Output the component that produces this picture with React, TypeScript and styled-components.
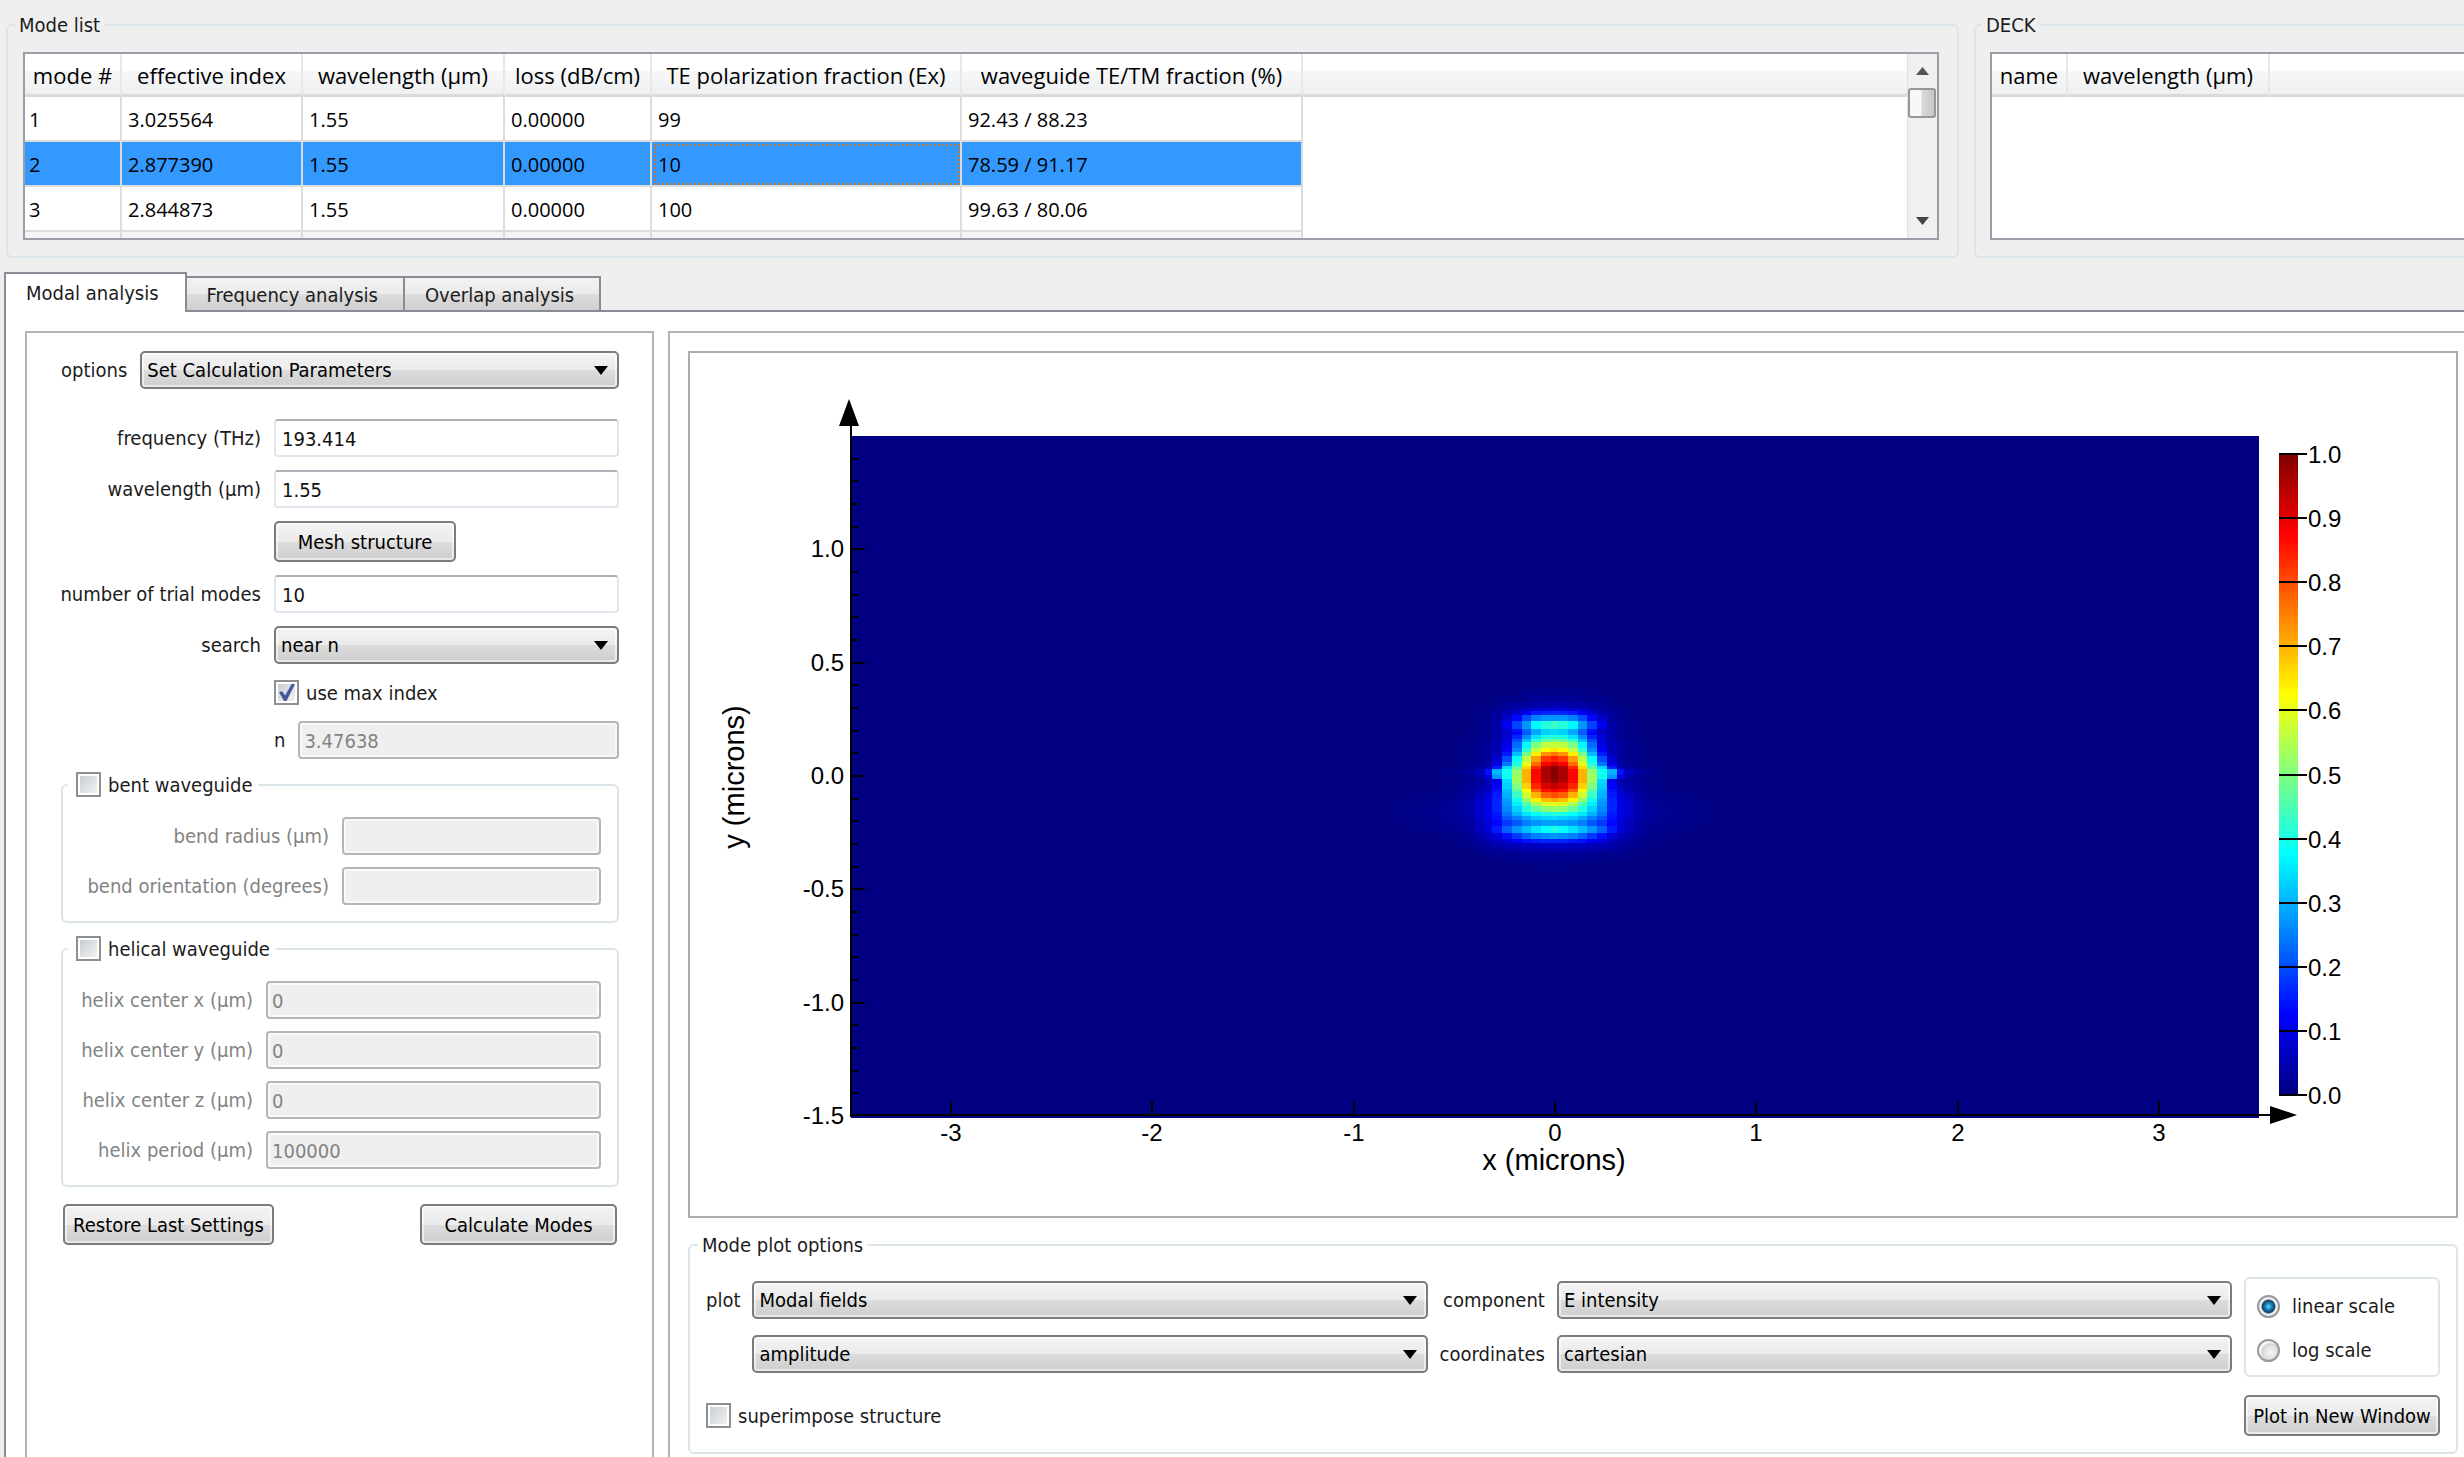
import React, { useId, useState } from "react";
import styled, { createGlobalStyle, css } from "styled-components";

const uiFont = `"DejaVu Sans Condensed", Tahoma, "DejaVu Sans", sans-serif`;
const gridFont = `"Open Sans", "Segoe UI", "Noto Sans", sans-serif`;
const plotFont = `"Liberation Sans", Arial, sans-serif`;

const GlobalStyle = createGlobalStyle`
  *, *::before, *::after { box-sizing: border-box; }
  body { margin: 0; background: #efefef; overflow: hidden; }
  input, select, button { font: inherit; color: inherit; margin: 0; }
`;

/* ---------- shell ---------- */

const Page = styled.div`
  display: flex;
  flex-direction: column;
  min-height: 100vh;
  color: #1c1c1c;
  font: 20px/24px ${uiFont};
`;

const TopRow = styled.div`
  display: flex;
  gap: 15px;
  padding: 13px 0 14px 6px;
`;

const Group = styled.fieldset`
  min-width: 0;
  margin: 0;
  padding: 15px 16px 16px;
  border: 2px solid #dce5ea;
  border-radius: 6px;
`;

const GroupTitle = styled.legend`
  margin-left: -8px;
  padding: 0 4px;
`;

const ModeListGroup = styled(Group)`
  flex: 1;
  padding-right: 18px;
  padding-left: 15px;
`;

const DeckGroup = styled(Group)`
  flex: 0 0 490px;
  padding-right: 0;
  padding-left: 14px;
  border-right: 0;
  border-radius: 6px 0 0 6px;
`;

/* ---------- tables ---------- */

const GridFrame = styled.div<{ $open?: boolean }>`
  display: flex;
  height: 188px;
  overflow: hidden;
  border: 2px solid #9a9ea7;
  border-right-width: ${(p) => (p.$open ? 0 : 2)}px;
  background: #fff;
`;

const GridScroll = styled.div`
  flex: 1;
  min-width: 0;
  overflow: hidden;
`;

const Grid = styled.table`
  width: 100%;
  table-layout: fixed;
  border-collapse: separate;
  border-spacing: 0;
  font: 20px/24px ${gridFont};
  color: #000;
`;

const Col = styled.col<{ $w?: number }>`
  width: ${(p) => (p.$w ? `${p.$w}px` : "auto")};
`;

const Th = styled.th<{ $last?: boolean }>`
  height: 43px;
  padding: 2px 0 0;
  border-right: ${(p) => (p.$last ? "0" : "2px solid #e6e8ea")};
  border-bottom: 3px solid #dadada;
  background: linear-gradient(#fff 42%, #f6f7f9 43%, #eff0f2);
  font-size: 22px;
  font-weight: 400;
  white-space: nowrap;
`;

const Tr = styled.tr<{ $selected?: boolean; $alt?: boolean }>`
  background: ${(p) => (p.$selected ? "#3399ff" : p.$alt ? "#f5f5f5" : "#fff")};
`;

const Td = styled.td<{ $focus?: boolean }>`
  height: 45px;
  padding: 2px 0 0 6px;
  border-right: 2px solid #dcdcdc;
  border-bottom: 2px solid #dcdcdc;
  white-space: nowrap;
  &:first-child {
    padding-left: 4px;
  }
  ${(p) =>
    p.$focus &&
    css`
      outline: 2px dotted #b5793e;
      outline-offset: -4px;
    `}
`;

const Blank = styled.td`
  background: #fff;
`;

const ScrollBar = styled.div`
  display: flex;
  flex-direction: column;
  align-items: stretch;
  width: 30px;
  border-left: 1px solid #e0e0e0;
  background: #f0f0f0;
`;

const ScrollButton = styled.button`
  display: flex;
  align-items: center;
  justify-content: center;
  height: 34px;
  padding: 0;
  border: 0;
  background: none;
`;

const ScrollTrack = styled.div`
  flex: 1;
`;

const ScrollThumb = styled.div`
  width: 28px;
  height: 30px;
  border: 2px solid #979797;
  border-radius: 3px;
  background: linear-gradient(90deg, #f8f8f8 45%, #d8dadc 50%, #c4c6c9);
`;

/* ---------- tabs ---------- */

const Tabs = styled.div`
  display: flex;
  align-items: flex-end;
  height: 38px;
  padding-left: 4px;
`;

const Tab = styled.button<{ $active: boolean }>`
  height: 34px;
  padding: 2px 25px 0 20px;
  border: 2px solid #898c95;
  border-left-width: 0;
  border-bottom: 0;
  background: linear-gradient(#f2f2f2, #ebebeb 50%, #dddddd 51%, #cfcfcf);
  ${(p) =>
    p.$active &&
    css`
      position: relative;
      height: 40px;
      margin-bottom: -2px;
      padding: 0 26px 0 20px;
      border-left-width: 2px;
      background: #fff;
    `}
`;

const Pane = styled.div`
  flex: 1;
  display: flex;
  gap: 14px;
  margin-left: 4px;
  padding: 19px 0 0 19px;
  border-top: 2px solid #898c95;
  border-left: 2px solid #898c95;
  background: #fff;
`;

const SettingsPanel = styled.form`
  flex: 0 0 629px;
  padding: 18px 33px 0 34px;
  border: 2px solid #b4b4b4;
  border-bottom: 0;
`;

const PlotPanel = styled.section`
  flex: 1;
  min-width: 0;
  padding: 18px 6px 0 18px;
  border: 2px solid #b4b4b4;
  border-width: 2px 0 0 2px;
`;

/* ---------- controls ---------- */

const raised = css`
  border: 2px solid #7c7c7c;
  border-radius: 5px;
  background: linear-gradient(#f3f3f3, #ebebeb 50%, #dcdcdc 51%, #cecece);
  box-shadow: inset 0 0 0 2px rgba(255, 255, 255, 0.55);
`;

const Button = styled.button<{ $w: number }>`
  ${raised}
  width: ${(p) => p.$w}px;
  height: 41px;
  padding: 0;
  color: #000;
  white-space: nowrap;
`;

const ComboBox = styled.div`
  position: relative;
  flex: 1;
  min-width: 0;
`;

const ComboSelect = styled.select`
  ${raised}
  appearance: none;
  display: block;
  width: 100%;
  height: 38px;
  padding: 0 40px 0 5px;
  color: #000;
`;

const ComboArrow = styled.svg`
  position: absolute;
  top: 15px;
  right: 11px;
  pointer-events: none;
`;

const TextBox = styled.input`
  width: 100%;
  min-width: 0;
  height: 38px;
  padding: 2px 6px 0;
  border: 2px solid #e1e5ed;
  border-top-color: #adb0b6;
  border-radius: 4px;
  background: #fff;
  color: #111;
  &:disabled {
    padding-left: 4px;
    border-color: #b6b6b6;
    background: #efefef;
    box-shadow: inset 0 0 0 2px #f9f9f9;
    color: #838383;
  }
`;

const Tick = styled.input`
  appearance: none;
  flex: none;
  display: grid;
  place-items: center;
  width: 25px;
  height: 25px;
  padding: 2px;
  border: 2px solid #8e8f8f;
  background: linear-gradient(135deg, #c4cad0, #f6f6f6);
  background-clip: content-box;
  &:checked::before {
    content: "";
    width: 17px;
    height: 17px;
    background: #46599c;
    clip-path: polygon(6% 48%, 24% 42%, 42% 68%, 80% 0, 100% 0, 50% 100%, 36% 100%);
  }
`;

const Radio = styled.input`
  appearance: none;
  flex: none;
  width: 23px;
  height: 23px;
  border: 2px solid #96989a;
  border-radius: 50%;
  background: radial-gradient(circle at 60% 60%, #f6f6f6, #d3d6d9 55%, #fafafa 62%);
  &:checked {
    background: radial-gradient(circle at 50% 50%, #4cc0ea 0 8%, #1b7fb4 25%, #123f5f 46%, #eef0f2 56%);
  }
`;

const CheckLabel = styled.label`
  display: flex;
  align-items: center;
  gap: 7px;
`;

const RadioLabel = styled(CheckLabel)`
  gap: 12px;
`;

/* ---------- settings form ---------- */

const OptionsRow = styled.div`
  display: flex;
  align-items: center;
  gap: 13px;
  margin-bottom: 30px;
`;

const FieldGrid = styled.div<{ $label: number; $gap?: number }>`
  display: grid;
  grid-template-columns: ${(p) => p.$label}px minmax(0, 1fr);
  align-items: center;
  gap: ${(p) => p.$gap ?? 12}px 13px;
`;

const FieldLabel = styled.label<{ $muted?: boolean }>`
  justify-self: end;
  color: ${(p) => (p.$muted ? "#838383" : "inherit")};
  white-space: nowrap;
`;

const SecondColumn = styled.div`
  grid-column: 2;
  display: flex;
  align-items: center;
  gap: 13px;
`;

const CheckCell = styled(SecondColumn)`
  height: 31px;
`;

const WaveguideGroup = styled(Group)`
  margin-top: 13px;
  padding-top: 19px;
`;

const WaveguideTitle = styled.legend`
  height: 26px;
  margin-left: -11px;
  padding: 0 6px 0 8px;
`;

const FormActions = styled.div`
  display: flex;
  justify-content: space-between;
  padding: 17px 2px;
`;

/* ---------- plot ---------- */

const PlotFrame = styled.div`
  border: 2px solid #adadad;
`;

const PlotSvg = styled.svg`
  display: block;
  width: 100%;
  height: auto;
  font-family: ${plotFont};
  font-size: 24px;
`;

const PlotOptions = styled(Group)`
  margin-top: 15px;
  padding: 20px 16px 16px;
`;

const PlotGrid = styled.div`
  display: grid;
  grid-template-columns: auto minmax(0, 1fr) auto minmax(0, 1fr) 196px;
  grid-template-rows: 46px 46px;
  align-items: center;
  gap: 8px 12px;
`;

const PlotSecond = styled.div`
  grid-column: 2;
`;

const ScaleBox = styled.div`
  grid-column: 5;
  grid-row: 1 / 3;
  align-self: stretch;
  display: flex;
  flex-direction: column;
  justify-content: center;
  gap: 20px;
  padding: 2px 0 0 11px;
  border: 2px solid #dce5ea;
  border-radius: 6px;
`;

const PlotFooter = styled.div`
  display: flex;
  align-items: center;
  justify-content: space-between;
  margin-top: 18px;
`;

/* ---------- small parts ---------- */

function Combo({ id, label, value }: { id?: string; label?: string; value: string }) {
  return (
    <ComboBox>
      <ComboSelect id={id} aria-label={label} defaultValue={value}>
        <option>{value}</option>
      </ComboSelect>
      <ComboArrow width="14" height="9" viewBox="0 0 14 9" aria-hidden="true">
        <path d="M0 0H14L7 9Z" fill="#000" />
      </ComboArrow>
    </ComboBox>
  );
}

function Field({ label, value, disabled }: { label: string; value: string; disabled?: boolean }) {
  const id = useId();
  return (
    <>
      <FieldLabel htmlFor={id} $muted={disabled}>{label}</FieldLabel>
      <TextBox id={id} defaultValue={value} disabled={disabled} />
    </>
  );
}

/* ---------- heat map ---------- */

const jetStops: [number, number[]][] = [
  [0, [0, 0, 128]],
  [0.125, [0, 0, 255]],
  [0.375, [0, 255, 255]],
  [0.625, [255, 255, 0]],
  [0.875, [255, 0, 0]],
  [1, [128, 0, 0]],
];

function jet(v: number) {
  const t = Math.max(0, Math.min(1, v));
  const i = Math.max(1, jetStops.findIndex(([s]) => t <= s));
  const [a, ca] = jetStops[i - 1];
  const [b, cb] = jetStops[i];
  const k = (t - a) / (b - a);
  return `rgb(${ca.map((c, n) => Math.round(c + (cb[n] - c) * k)).join(",")})`;
}

// Mesh rows: [top, E intensity for the columns from the centre outwards].
// Lengths are in thirds of a plot unit.
const meshRows: [number, number[]][] = [
  [136, [0.005, 0.005, 0.005]],
  [150, [0.01, 0.01, 0.01, 0.01]],
  [168, [0.025, 0.025, 0.02, 0.015, 0.01, 0.01]],
  [185, [0.045, 0.045, 0.04, 0.035, 0.03, 0.02, 0.01]],
  [204, [0.09, 0.09, 0.08, 0.07, 0.05, 0.03, 0.02, 0.01]],
  [214, [0.17, 0.16, 0.15, 0.12, 0.08, 0.05, 0.03, 0.01]],
  [226, [0.27, 0.27, 0.25, 0.2, 0.13, 0.07, 0.03, 0.01]],
  [243, [0.43, 0.41, 0.37, 0.27, 0.19, 0.11, 0.04, 0.02]],
  [266, [0.34, 0.33, 0.29, 0.22, 0.14, 0.07, 0.04, 0.02]],
  [275, [0.34, 0.33, 0.29, 0.21, 0.13, 0.07, 0.04, 0.02]],
  [285, [0.41, 0.4, 0.35, 0.26, 0.16, 0.08, 0.04, 0.02]],
  [296, [0.49, 0.47, 0.42, 0.31, 0.2, 0.09, 0.04, 0.02]],
  [306, [0.57, 0.56, 0.5, 0.37, 0.23, 0.1, 0.05, 0.03]],
  [325, [0.65, 0.63, 0.56, 0.42, 0.26, 0.12, 0.05, 0.03]],
  [337, [0.76, 0.73, 0.64, 0.49, 0.31, 0.15, 0.06, 0.03]],
  [347, [0.85, 0.82, 0.72, 0.56, 0.38, 0.2, 0.08, 0.03]],
  [365, [0.91, 0.88, 0.77, 0.6, 0.41, 0.24, 0.1, 0.04]],
  [377, [0.99, 0.95, 0.84, 0.66, 0.46, 0.34, 0.15, 0.05, 0.03]],
  [388, [1, 0.96, 0.87, 0.7, 0.52, 0.39, 0.3, 0.14, 0.06, 0.03, 0.02]],
  [406, [1, 0.96, 0.87, 0.7, 0.53, 0.39, 0.27, 0.1, 0.04, 0.02]],
  [417, [0.98, 0.95, 0.87, 0.7, 0.53, 0.34, 0.1, 0.05, 0.03]],
  [430, [0.94, 0.91, 0.84, 0.67, 0.5, 0.33, 0.12, 0.06, 0.04]],
  [446, [0.88, 0.86, 0.78, 0.62, 0.46, 0.31, 0.14, 0.08, 0.05]],
  [457, [0.8, 0.78, 0.7, 0.58, 0.43, 0.3, 0.15, 0.09, 0.06]],
  [475, [0.71, 0.69, 0.64, 0.52, 0.39, 0.28, 0.16, 0.1, 0.07]],
  [487, [0.6, 0.59, 0.54, 0.45, 0.36, 0.27, 0.16, 0.1, 0.08]],
  [498, [0.52, 0.51, 0.47, 0.41, 0.33, 0.26, 0.16, 0.1, 0.08]],
  [516, [0.41, 0.4, 0.38, 0.35, 0.3, 0.24, 0.15, 0.1, 0.08]],
  [528, [0.34, 0.33, 0.32, 0.29, 0.25, 0.21, 0.14, 0.1, 0.07]],
  [540, [0.28, 0.28, 0.27, 0.25, 0.21, 0.18, 0.13, 0.09, 0.06]],
  [557, [0.4, 0.38, 0.35, 0.31, 0.27, 0.22, 0.15, 0.09, 0.06]],
  [580, [0.27, 0.26, 0.25, 0.22, 0.18, 0.14, 0.09, 0.06, 0.04]],
  [598, [0.16, 0.16, 0.15, 0.14, 0.12, 0.09, 0.06, 0.04, 0.03]],
  [610, [0.07, 0.07, 0.065, 0.06, 0.055, 0.05, 0.04, 0.03, 0.02]],
  [627, [0.035, 0.035, 0.035, 0.03, 0.03, 0.025, 0.02, 0.015, 0.01]],
  [640, [0.02, 0.02, 0.02, 0.02, 0.015, 0.015, 0.01, 0.01]],
  [656, [0.01, 0.01, 0.01, 0.01, 0.01, 0.005]],
  [672, [0.005, 0.005, 0.005]],
  [690, []],
];
const meshEdges = [12, 41, 70, 99, 129, 158, 187, 209, 238, 267, 296, 325, 354, 383, 412, 441, 470, 499, 528, 557];

function tail(row: number[], y: number, i: number) {
  const last = row.length - 1;
  const near = (row[last] ?? 0) * Math.exp(-(i - last) / 1.6);
  const halo = 0.07 * Math.exp(-(((y - 510) / 60) ** 2)) * Math.exp(-(i - 7) / 3.6);
  return Math.max(near, halo);
}

function ModeField() {
  const cells: React.ReactElement[] = [];
  for (let r = 0; r < meshRows.length - 1; r++) {
    const [y, row] = meshRows[r];
    const h = meshRows[r + 1][0] - y;
    for (let i = meshEdges.length - 1; i >= 0; i--) {
      const v = i < row.length ? row[i] : tail(row, y, i);
      if (v < 0.004) continue;
      const e = meshEdges[i];
      // Each wider rectangle is overdrawn by the next one towards the centre.
      cells.push(<rect key={`${r}-${i}`} x={-e} y={y} width={2 * e} height={h} fill={jet(v)} />);
    }
  }
  return <g transform="translate(864.5 287) scale(0.33333)" shapeRendering="crispEdges">{cells}</g>;
}

const yTicks = [1, 0.5, 0, -0.5, -1, -1.5];
const xTicks = [-3, -2, -1, 0, 1, 2, 3];
const barTicks = Array.from({ length: 11 }, (_, i) => i / 10);
const minorTicks = Array.from({ length: 29 }, (_, i) => (i - 14) / 10).filter((v) => Math.round(v * 10) % 5 !== 0);
const yPos = (v: number) => Math.round(423 - v * 226.6);
const xPos = (v: number) => Math.round(865 + v * 201.4);
const barPos = (v: number) => Math.round(742 - v * 641);

function ModePlot() {
  return (
    <PlotSvg viewBox="0 0 1766 863" role="img" aria-label="E intensity">
      <defs>
        <linearGradient id="jet" x1="0" y1="1" x2="0" y2="0">
          {jetStops.map(([s]) => <stop key={s} offset={s} stopColor={jet(s)} />)}
        </linearGradient>
      </defs>
      <rect x="161" y="83" width="1408" height="682" fill="#000080" />
      <ModeField />
      <g stroke="#000" strokeWidth="2">
        <path d="M161 72V764M160 762H1580" fill="none" />
        {yTicks.slice(0, 5).map((v) => <path key={v} d={`M161 ${yPos(v)}h14`} />)}
        {minorTicks.map((v) => <path key={v} d={`M161 ${yPos(v)}h7`} />)}
        {xTicks.map((v) => <path key={v} d={`M${xPos(v)} 762v-14`} />)}
      </g>
      <path d="M159 46L169 73H149ZM1607 762L1580 753V771Z" />
      {yTicks.map((v) => <text key={v} x="154" y={yPos(v) + 8} textAnchor="end">{v.toFixed(1)}</text>)}
      {xTicks.map((v) => <text key={v} x={xPos(v)} y="788" textAnchor="middle">{v}</text>)}
      <text x="864" y="817" textAnchor="middle" fontSize="29">x (microns)</text>
      <text transform="translate(54 424) rotate(-90)" textAnchor="middle" fontSize="29">y (microns)</text>
      <rect x="1589" y="101" width="19" height="641" fill="url(#jet)" />
      {barTicks.map((v) => (
        <g key={v}>
          <path d={`M1589 ${barPos(v)}h28`} stroke="#000" strokeWidth="2" />
          <text x="1618" y={barPos(v) + 9}>{v.toFixed(1)}</text>
        </g>
      ))}
    </PlotSvg>
  );
}

/* ---------- data ---------- */

const modeColumns: [string, number][] = [
  ["mode #", 97],
  ["effective index", 181],
  ["wavelength (µm)", 202],
  ["loss (dB/cm)", 147],
  ["TE polarization fraction (Ex)", 310],
  ["waveguide TE/TM fraction (%)", 341],
];

const modes = [
  ["1", "3.025564", "1.55", "0.00000", "99", "92.43 / 88.23"],
  ["2", "2.877390", "1.55", "0.00000", "10", "78.59 / 91.17"],
  ["3", "2.844873", "1.55", "0.00000", "100", "99.63 / 80.06"],
  ["", "", "", "", "", ""],
];

const deckColumns: [string, number][] = [["name", 76], ["wavelength (µm)", 202]];

function GridHead({ columns }: { columns: [string, number][] }) {
  return (
    <>
      <colgroup>
        {columns.map(([name, w]) => <Col key={name} $w={w} />)}
        <Col />
      </colgroup>
      <thead>
        <tr>
          {columns.map(([name]) => <Th key={name} scope="col">{name}</Th>)}
          <Th as="td" $last />
        </tr>
      </thead>
    </>
  );
}

const tabNames = ["Modal analysis", "Frequency analysis", "Overlap analysis"];

export default function App() {
  const [tab, setTab] = useState(0);
  const [selected, setSelected] = useState(1);
  return (
    <Page>
      <GlobalStyle />
      <TopRow>
        <ModeListGroup>
          <GroupTitle>Mode list</GroupTitle>
          <GridFrame>
            <GridScroll>
              <Grid>
                <GridHead columns={modeColumns} />
                <tbody>
                  {modes.map((row, r) => (
                    <Tr key={r} $selected={r === selected} $alt={r === 3} onClick={() => setSelected(r)}>
                      {row.map((cell, c) => <Td key={c} $focus={r === selected && c === 4}>{cell}</Td>)}
                      <Blank />
                    </Tr>
                  ))}
                </tbody>
              </Grid>
            </GridScroll>
            <ScrollBar>
              <ScrollButton type="button" aria-label="Scroll up">
                <svg width="13" height="8" viewBox="0 0 13 8"><path d="M6.5 0L13 8H0Z" fill="#555" /></svg>
              </ScrollButton>
              <ScrollThumb />
              <ScrollTrack />
              <ScrollButton type="button" aria-label="Scroll down">
                <svg width="13" height="8" viewBox="0 0 13 8"><path d="M0 0H13L6.5 8Z" fill="#444" /></svg>
              </ScrollButton>
            </ScrollBar>
          </GridFrame>
        </ModeListGroup>
        <DeckGroup>
          <GroupTitle>DECK</GroupTitle>
          <GridFrame $open>
            <GridScroll>
              <Grid><GridHead columns={deckColumns} /></Grid>
            </GridScroll>
          </GridFrame>
        </DeckGroup>
      </TopRow>

      <Tabs role="tablist">
        {tabNames.map((name, i) => (
          <Tab key={name} type="button" role="tab" aria-selected={i === tab} $active={i === tab} onClick={() => setTab(i)}>
            {name}
          </Tab>
        ))}
      </Tabs>

      <Pane>
        <SettingsPanel onSubmit={(e) => e.preventDefault()}>
          <OptionsRow>
            <label htmlFor="options">options</label>
            <Combo id="options" value="Set Calculation Parameters" />
          </OptionsRow>
          <FieldGrid $label={200} $gap={13}>
            <Field label="frequency (THz)" value="193.414" />
            <Field label="wavelength (µm)" value="1.55" />
            <SecondColumn><Button type="button" $w={182}>Mesh structure</Button></SecondColumn>
            <Field label="number of trial modes" value="10" />
            <FieldLabel htmlFor="search">search</FieldLabel>
            <Combo id="search" value="near n" />
            <CheckCell>
              <CheckLabel><Tick type="checkbox" defaultChecked />use max index</CheckLabel>
            </CheckCell>
            <SecondColumn>
              <label htmlFor="index-n">n</label>
              <TextBox id="index-n" defaultValue="3.47638" disabled />
            </SecondColumn>
          </FieldGrid>

          <WaveguideGroup>
            <WaveguideTitle>
              <CheckLabel><Tick type="checkbox" />bent waveguide</CheckLabel>
            </WaveguideTitle>
            <FieldGrid $label={250}>
              <Field label="bend radius (µm)" value="" disabled />
              <Field label="bend orientation (degrees)" value="" disabled />
            </FieldGrid>
          </WaveguideGroup>

          <WaveguideGroup>
            <WaveguideTitle>
              <CheckLabel><Tick type="checkbox" />helical waveguide</CheckLabel>
            </WaveguideTitle>
            <FieldGrid $label={174}>
              <Field label="helix center x (µm)" value="0" disabled />
              <Field label="helix center y (µm)" value="0" disabled />
              <Field label="helix center z (µm)" value="0" disabled />
              <Field label="helix period (µm)" value="100000" disabled />
            </FieldGrid>
          </WaveguideGroup>

          <FormActions>
            <Button type="button" $w={211}>Restore Last Settings</Button>
            <Button type="submit" $w={197}>Calculate Modes</Button>
          </FormActions>
        </SettingsPanel>

        <PlotPanel>
          <PlotFrame><ModePlot /></PlotFrame>
          <PlotOptions>
            <GroupTitle>Mode plot options</GroupTitle>
            <PlotGrid>
              <FieldLabel htmlFor="plot">plot</FieldLabel>
              <Combo id="plot" value="Modal fields" />
              <FieldLabel htmlFor="component">component</FieldLabel>
              <Combo id="component" value="E intensity" />
              <PlotSecond><Combo label="quantity" value="amplitude" /></PlotSecond>
              <FieldLabel htmlFor="coordinates">coordinates</FieldLabel>
              <Combo id="coordinates" value="cartesian" />
              <ScaleBox role="radiogroup" aria-label="scale">
                <RadioLabel><Radio type="radio" name="scale" defaultChecked />linear scale</RadioLabel>
                <RadioLabel><Radio type="radio" name="scale" />log scale</RadioLabel>
              </ScaleBox>
            </PlotGrid>
            <PlotFooter>
              <CheckLabel><Tick type="checkbox" />superimpose structure</CheckLabel>
              <Button type="button" $w={196}>Plot in New Window</Button>
            </PlotFooter>
          </PlotOptions>
        </PlotPanel>
      </Pane>
    </Page>
  );
}
